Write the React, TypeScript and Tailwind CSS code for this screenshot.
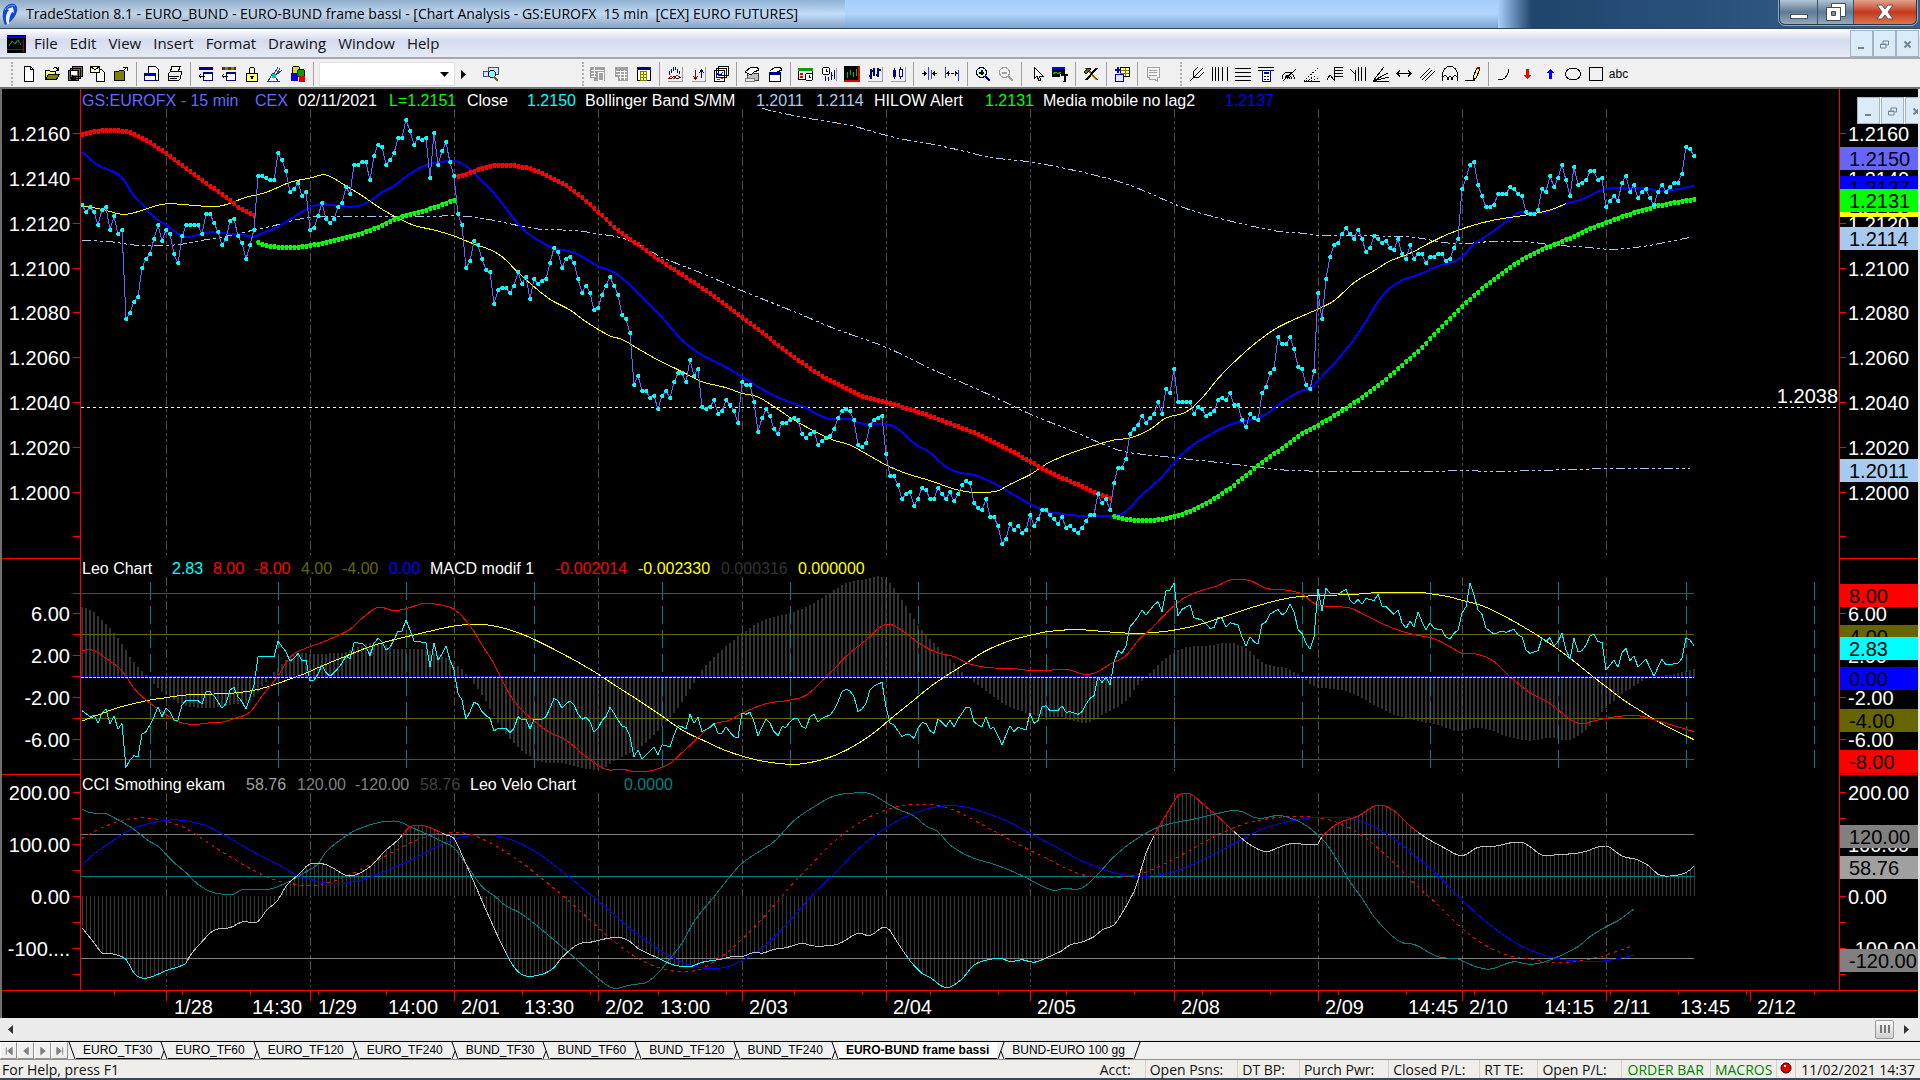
import type { ReactNode } from 'react';

type Point = [number, number];

// ---------------------------------------------------------------------------
// Chart data
// ---------------------------------------------------------------------------

// Closing prices, one per 15 min bar, in ticks (2150 = 1.2150)
const closes = [
  2128, 2125, 2127, 2125, 2119, 2126, 2127, 2117, 2123, 2115, 2117, 2077, 2080, 2085, 2087, 2100, 2104, 2106, 2113, 2119,
  2112, 2117, 2115, 2106, 2102, 2114, 2119, 2119, 2119, 2119, 2115, 2124, 2124, 2120, 2116, 2110, 2113, 2121, 2122, 2114,
  2111, 2104, 2110, 2117, 2141, 2141, 2140, 2139, 2139, 2151, 2148, 2143, 2134, 2135, 2138, 2132, 2134, 2117, 2118, 2123,
  2129, 2122, 2120, 2122, 2127, 2129, 2136, 2133, 2146, 2146, 2147, 2147, 2139, 2150, 2155, 2154, 2146, 2148, 2151, 2158,
  2158, 2166, 2161, 2155, 2158, 2157, 2158, 2140, 2160, 2146, 2152, 2156, 2147, 2141, 2124, 2119, 2100, 2103, 2112, 2110,
  2104, 2099, 2098, 2084, 2090, 2091, 2091, 2089, 2092, 2098, 2093, 2096, 2086, 2095, 2093, 2094, 2095, 2102, 2109, 2107,
  2100, 2104, 2105, 2102, 2095, 2089, 2092, 2089, 2081, 2082, 2088, 2092, 2096, 2092, 2088, 2079, 2077, 2071, 2048, 2052,
  2045, 2045, 2042, 2043, 2037, 2043, 2045, 2042, 2049, 2053, 2053, 2049, 2059, 2052, 2055, 2038, 2037, 2038, 2041, 2035,
  2036, 2041, 2039, 2036, 2031, 2049, 2048, 2048, 2040, 2027, 2033, 2037, 2034, 2028, 2026, 2031, 2031, 2032, 2033, 2032,
  2026, 2024, 2026, 2027, 2021, 2023, 2024, 2025, 2028, 2033, 2036, 2037, 2036, 2032, 2021, 2020, 2022, 2030, 2032, 2033,
  2034, 2017, 2007, 2007, 2003, 1997, 1999, 2000, 1994, 1997, 2002, 2001, 1997, 1997, 2002, 1999, 1997, 2000, 1996, 1999,
  2003, 2005, 2004, 1995, 1993, 1992, 1997, 1989, 1989, 1985, 1977, 1979, 1986, 1983, 1985, 1982, 1983, 1990, 1985, 1988,
  1992, 1992, 1990, 1988, 1986, 1989, 1984, 1985, 1983, 1982, 1984, 1987, 1990, 1990, 1999, 1995, 1997, 1992, 2004, 2011,
  2011, 2015, 2026, 2028, 2030, 2034, 2031, 2033, 2035, 2040, 2035, 2046, 2044, 2055, 2040, 2040, 2040, 2040, 2035, 2038,
  2037, 2034, 2035, 2036, 2041, 2042, 2041, 2044, 2039, 2039, 2032, 2029, 2035, 2033, 2032, 2044, 2047, 2053, 2055, 2069,
  2066, 2066, 2069, 2064, 2056, 2055, 2048, 2046, 2054, 2089, 2077, 2095, 2105, 2110, 2111, 2115, 2118, 2115, 2113, 2117,
  2113, 2107, 2109, 2114, 2113, 2111, 2112, 2109, 2108, 2113, 2106, 2104, 2110, 2104, 2106, 2106, 2102, 2105, 2105, 2106,
  2106, 2103, 2104, 2109, 2113, 2135, 2140, 2146, 2147, 2137, 2132, 2127, 2127, 2128, 2133, 2133, 2133, 2136, 2135, 2133,
  2132, 2125, 2124, 2124, 2126, 2135, 2134, 2141, 2136, 2140, 2146, 2139, 2132, 2145, 2137, 2138, 2139, 2143, 2143, 2139,
  2140, 2127, 2130, 2132, 2130, 2138, 2141, 2134, 2137, 2131, 2134, 2135, 2131, 2128, 2134, 2137, 2134, 2136, 2138, 2138,
  2142, 2154, 2153, 2150,
];

// Indicator curves: [bar, level], levels are thirds of a pixel down the pane
const alertRed1: Point[] = [[0, 71], [3, 64], [7, 60], [12, 67], [16, 90], [21, 129], [26, 174], [31, 218], [35, 252], [38, 280], [40, 298], [43, 315]];
const alertRed2: Point[] = [
  [94, 199], [97, 187], [100, 174], [103, 166], [106, 164], [109, 168], [113, 179], [117, 202], [120, 219], [124, 252], [129, 305], [134, 360],
  [139, 403], [144, 446], [150, 493], [155, 533], [160, 575], [165, 620], [170, 665], [175, 715], [181, 765], [186, 805], [191, 833], [195, 857],
  [201, 876], [209, 905], [215, 931], [220, 953], [226, 983], [232, 1020], [237, 1053], [243, 1093], [248, 1118], [253, 1145], [257, 1163],
];
const alertGreen1: Point[] = [[44, 396], [46, 405], [49, 410], [53, 411], [57, 405], [60, 398], [64, 386], [69, 372], [74, 350], [79, 323], [84, 306], [89, 287], [93, 270]];
const alertGreen2: Point[] = [
  [258, 1217], [261, 1226], [264, 1230], [268, 1230], [273, 1218], [278, 1197], [283, 1165], [288, 1124], [291, 1094], [296, 1048], [300, 1013],
  [305, 970], [309, 944], [314, 908], [319, 869], [324, 825], [329, 775], [334, 722], [339, 660], [344, 600], [348, 555], [353, 507], [357, 470],
  [362, 435], [366, 412], [371, 388], [376, 360], [381, 336], [386, 315], [391, 296], [396, 281], [403, 267],
];
const noLagAverage: Point[] = [
  [0, 125], [4, 166], [7, 181], [10, 203], [13, 258], [16, 295], [18, 322], [21, 345], [25, 378], [27, 380], [30, 372], [32, 367], [35, 370],
  [39, 372], [43, 380], [45, 370], [49, 350], [52, 328], [57, 292], [60, 283], [65, 289], [69, 288], [72, 273], [75, 247], [78, 228], [82, 191],
  [86, 165], [90, 156], [93, 152], [96, 168], [99, 200], [103, 250], [106, 295], [110, 355], [114, 390], [118, 415], [123, 428], [129, 468],
  [133, 487], [137, 525], [140, 562], [145, 622], [150, 690], [155, 735], [160, 765], [165, 800], [171, 844], [176, 872], [181, 893], [184, 914],
  [187, 927], [192, 928], [195, 941], [201, 942], [204, 957], [208, 1000], [212, 1028], [216, 1070], [219, 1087], [223, 1095], [228, 1120],
  [233, 1155], [237, 1182], [241, 1203], [245, 1212], [249, 1217], [258, 1217], [261, 1204], [265, 1155], [270, 1100], [274, 1045], [278, 1003],
  [284, 961], [288, 940], [292, 930], [296, 913], [299, 885], [304, 847], [308, 829], [309, 812], [313, 762], [318, 688], [321, 634], [324, 575],
  [327, 535], [330, 511], [335, 490], [339, 468], [342, 460], [345, 440], [348, 403], [352, 371], [356, 335], [359, 308], [362, 307], [365, 310],
  [371, 282], [375, 268], [381, 237], [391, 235], [394, 243], [397, 241], [403, 228],
];
const bandMiddle: Point[] = [
  [0, 288], [5, 298], [10, 313], [13, 308], [19, 286], [22, 281], [31, 289], [35, 287], [41, 262], [46, 247], [52, 217], [57, 204], [61, 195],
  [66, 228], [70, 257], [74, 290], [78, 318], [83, 346], [88, 360], [93, 378], [98, 402], [102, 419], [105, 440], [109, 487], [113, 530],
  [117, 568], [122, 600], [126, 635], [132, 678], [135, 688], [139, 716], [144, 750], [150, 785], [155, 815], [161, 833], [165, 850], [169, 861],
  [173, 890], [178, 930], [183, 963], [188, 991], [192, 1005], [197, 1038], [201, 1065], [206, 1090], [212, 1112], [219, 1140], [224, 1148],
  [229, 1142], [232, 1123], [237, 1094], [242, 1056], [249, 1022], [258, 990], [262, 984], [267, 958], [271, 924], [276, 906], [280, 864],
  [284, 806], [288, 757], [293, 703], [299, 652], [309, 597], [313, 572], [318, 518], [323, 482], [327, 453], [332, 430], [338, 392], [342, 370],
  [348, 345], [354, 328], [361, 315], [367, 300], [371, 281],
];
const bandLower: Point[] = [
  [0, 391], [7, 395], [14, 406], [24, 404], [30, 391], [36, 379], [43, 360], [48, 347], [53, 331], [57, 322], [61, 319], [67, 320], [78, 319],
  [88, 319], [94, 317], [102, 329], [108, 344], [114, 357], [124, 362], [129, 372], [134, 381], [139, 403], [145, 442], [155, 490], [165, 542],
  [177, 600], [188, 655], [201, 712], [212, 775], [227, 855], [237, 912], [249, 970], [258, 1016], [262, 1028], [273, 1043], [283, 1056],
  [291, 1067], [299, 1079], [304, 1081], [310, 1085], [339, 1084], [345, 1081], [353, 1085], [361, 1082], [375, 1078], [381, 1076], [402, 1076],
];
const bandUpper: Point[] = [
  [170, -6], [172, 2], [183, 28], [192, 46], [201, 76], [207, 92], [213, 104], [220, 122], [227, 142], [237, 156], [248, 181], [259, 214],
  [266, 245], [273, 282], [279, 307], [288, 336], [299, 364], [304, 368], [309, 376], [320, 377], [333, 382], [340, 397], [345, 401], [352, 395],
  [361, 395], [367, 404], [375, 411], [383, 418], [391, 408], [396, 397], [402, 382],
];

const macdBars: Point[] = [
  [0, 170], [3, 187], [6, 222], [8, 250], [10, 282], [12, 320], [14, 352], [16, 376], [18, 402], [20, 428], [22, 443], [25, 466], [28, 473],
  [34, 473], [39, 462], [42, 455], [45, 410], [47, 382], [48, 367], [51, 330], [54, 312], [58, 311], [65, 308], [68, 296], [74, 275], [78, 297],
  [85, 297], [89, 315], [92, 330], [94, 347], [96, 371], [98, 402], [101, 455], [104, 520], [108, 580], [112, 620], [116, 640], [120, 640],
  [129, 661], [133, 635], [137, 610], [140, 590], [143, 555], [147, 505], [150, 457], [153, 400], [154, 380], [156, 345], [160, 300], [165, 250],
  [171, 207], [177, 190], [182, 165], [187, 128], [191, 100], [197, 85], [200, 80], [202, 100], [205, 150], [209, 225], [213, 280], [218, 340],
  [221, 378], [225, 415], [230, 460], [235, 485], [240, 500], [245, 503], [251, 520], [256, 490], [261, 455], [264, 405], [266, 382], [269, 345],
  [272, 315], [276, 292], [283, 285], [287, 278], [291, 295], [295, 335], [299, 350], [301, 355], [305, 380], [308, 410], [313, 418], [316, 425],
  [319, 440], [323, 465], [328, 495], [334, 515], [339, 525], [344, 545], [348, 536], [352, 540], [356, 560], [362, 573], [367, 564], [372, 570],
  [376, 540], [381, 475], [386, 425], [390, 395], [392, 385], [396, 376], [403, 358],
];
const macdSlow: Point[] = [
  [0, 513], [4, 495], [9, 473], [17, 450], [21, 443], [25, 436], [30, 433], [37, 430], [42, 423], [46, 412], [49, 400], [55, 374], [60, 348],
  [65, 323], [72, 290], [77, 272], [83, 255], [89, 238], [93, 228], [98, 223], [102, 226], [107, 240], [113, 268], [123, 330], [129, 372],
  [133, 404], [139, 450], [145, 498], [150, 540], [156, 575], [161, 602], [167, 625], [172, 637], [178, 643], [183, 635], [188, 617], [193, 588],
  [198, 548], [202, 508], [208, 450], [213, 402], [221, 340], [226, 302], [232, 272], [237, 256], [242, 244], [249, 239], [257, 246], [264, 250],
  [272, 242], [278, 228], [284, 206], [292, 174], [299, 151], [304, 140], [309, 137], [318, 133], [324, 128], [335, 128], [338, 133], [342, 141],
  [345, 151], [350, 167], [355, 195], [360, 228], [365, 265], [371, 315], [376, 363], [381, 410], [386, 455], [390, 485], [393, 508], [398, 540],
  [403, 569],
];
const macdFast: Point[] = [
  [0, 301], [3, 301], [6, 325], [10, 362], [13, 415], [16, 450], [20, 485], [24, 515], [28, 523], [33, 517], [35, 517], [38, 506], [42, 486],
  [45, 438], [49, 378], [52, 322], [55, 299], [59, 282], [63, 262], [67, 238], [70, 205], [74, 172], [78, 182], [81, 176], [86, 160], [92, 172],
  [94, 187], [97, 227], [100, 284], [103, 342], [107, 435], [110, 480], [114, 522], [117, 548], [121, 570], [126, 620], [131, 658], [135, 658],
  [139, 666], [143, 660], [147, 640], [150, 608], [153, 575], [156, 540], [158, 522], [162, 510], [165, 490], [171, 461], [177, 450], [181, 436],
  [186, 382], [191, 320], [196, 270], [201, 222], [205, 242], [210, 285], [214, 308], [218, 320], [222, 342], [227, 353], [232, 355], [239, 363],
  [246, 358], [251, 374], [254, 365], [257, 342], [261, 317], [264, 272], [268, 228], [271, 190], [275, 148], [279, 125], [284, 107], [287, 90],
  [292, 92], [296, 115], [299, 118], [302, 122], [305, 132], [308, 160], [310, 169], [317, 174], [322, 203], [328, 236], [333, 254], [338, 266],
  [342, 290], [345, 310], [349, 313], [353, 335], [357, 380], [362, 428], [367, 460], [372, 508], [375, 521], [378, 513], [383, 501], [389, 497],
  [394, 513], [398, 527], [403, 545],
];
const leo: Point[] = [
  [0, 482], [2, 500], [3, 495], [4, 520], [5, 488], [6, 478], [7, 522], [8, 497], [9, 538], [10, 520], [11, 652], [12, 630], [13, 617], [14, 620],
  [15, 552], [16, 545], [17, 525], [18, 500], [19, 470], [20, 500], [21, 475], [22, 485], [23, 510], [24, 510], [25, 465], [26, 451], [29, 452],
  [30, 462], [31, 425], [32, 425], [33, 437], [34, 455], [35, 475], [36, 460], [37, 420], [38, 412], [39, 440], [40, 455], [41, 477], [42, 440],
  [43, 405], [44, 320], [48, 320], [49, 273], [50, 290], [51, 305], [52, 333], [53, 325], [54, 310], [55, 333], [56, 330], [57, 393], [58, 390],
  [59, 372], [60, 345], [61, 368], [62, 380], [63, 368], [64, 355], [65, 340], [66, 317], [67, 327], [68, 278], [70, 280], [71, 290], [72, 317],
  [73, 280], [74, 265], [75, 275], [76, 300], [77, 292], [78, 270], [79, 243], [80, 243], [81, 210], [82, 240], [83, 273], [86, 278], [87, 352],
  [88, 278], [89, 330], [90, 312], [91, 287], [92, 330], [93, 360], [94, 430], [95, 450], [96, 508], [97, 485], [98, 457], [99, 463], [100, 485],
  [101, 497], [102, 505], [103, 543], [104, 535], [106, 535], [107, 548], [108, 535], [109, 500], [110, 510], [111, 508], [112, 537], [113, 508],
  [115, 507], [116, 500], [117, 475], [118, 445], [119, 452], [120, 475], [121, 462], [122, 453], [123, 465], [124, 492], [125, 508], [126, 502],
  [127, 515], [128, 547], [129, 535], [130, 512], [131, 500], [132, 472], [133, 490], [134, 510], [135, 528], [136, 532], [137, 560], [138, 620],
  [139, 600], [140, 627], [143, 592], [144, 615], [145, 584], [147, 590], [148, 555], [149, 527], [150, 530], [151, 537], [152, 493], [153, 520],
  [154, 502], [155, 545], [157, 533], [158, 520], [159, 550], [160, 550], [161, 530], [162, 547], [163, 560], [164, 563], [165, 490], [166, 493],
  [167, 487], [168, 515], [169, 558], [170, 530], [171, 507], [172, 520], [173, 545], [174, 557], [175, 530], [176, 532], [177, 515], [178, 506],
  [179, 506], [180, 530], [181, 535], [182, 500], [183, 493], [184, 515], [185, 505], [187, 495], [188, 480], [189, 455], [190, 425], [191, 418],
  [192, 423], [193, 440], [194, 485], [195, 477], [196, 460], [197, 420], [198, 408], [200, 397], [201, 470], [202, 520], [203, 525], [205, 560],
  [206, 553], [207, 555], [208, 565], [209, 535], [210, 518], [211, 520], [212, 542], [213, 550], [214, 507], [215, 517], [216, 530], [217, 510],
  [218, 530], [219, 507], [220, 490], [221, 472], [222, 473], [223, 515], [224, 525], [225, 530], [226, 500], [227, 535], [228, 533], [229, 557],
  [230, 585], [231, 555], [232, 527], [233, 545], [234, 532], [236, 540], [237, 490], [238, 520], [239, 512], [240, 470], [241, 467], [242, 482],
  [244, 482], [245, 467], [246, 487], [247, 485], [249, 493], [250, 485], [251, 463], [252, 445], [253, 437], [254, 380], [255, 398], [256, 382],
  [257, 405], [258, 337], [259, 302], [260, 310], [261, 288], [262, 230], [263, 217], [264, 200], [265, 180], [266, 195], [267, 180], [268, 165],
  [269, 155], [270, 185], [271, 122], [272, 120], [273, 100], [274, 198], [275, 178], [277, 165], [278, 203], [280, 210], [282, 235], [283, 233],
  [284, 202], [285, 205], [286, 232], [287, 218], [289, 225], [290, 260], [291, 288], [292, 260], [293, 275], [294, 282], [295, 223], [296, 215],
  [297, 192], [299, 178], [300, 195], [301, 187], [302, 162], [303, 185], [304, 238], [305, 250], [306, 280], [307, 298], [308, 260], [309, 117],
  [310, 182], [311, 115], [312, 130], [314, 132], [316, 118], [317, 150], [318, 162], [319, 148], [320, 163], [321, 145], [323, 152], [324, 133],
  [325, 168], [326, 170], [328, 193], [329, 180], [330, 218], [331, 235], [332, 213], [333, 232], [334, 185], [335, 215], [336, 240], [337, 218],
  [338, 235], [340, 240], [341, 262], [342, 267], [343, 250], [344, 240], [345, 190], [346, 170], [347, 100], [348, 135], [349, 180], [350, 193],
  [351, 235], [353, 252], [355, 243], [356, 247], [358, 238], [359, 255], [360, 260], [361, 300], [362, 310], [364, 302], [365, 265], [366, 275],
  [367, 263], [368, 288], [369, 275], [370, 250], [371, 300], [372, 327], [373, 265], [374, 305], [375, 302], [376, 285], [377, 258], [378, 253],
  [379, 275], [380, 277], [381, 360], [383, 330], [384, 352], [385, 308], [386, 295], [387, 333], [388, 317], [389, 352], [390, 340], [391, 328],
  [392, 353], [393, 380], [394, 352], [395, 328], [396, 345], [399, 340], [400, 325], [401, 265], [402, 270], [403, 287],
];

const cci: Point[] = [
  [0, 1133], [3, 1178], [5, 1209], [7, 1210], [11, 1228], [13, 1270], [15, 1284], [17, 1282], [21, 1262], [26, 1240], [27, 1217], [30, 1175],
  [33, 1141], [37, 1133], [40, 1116], [44, 1115], [46, 1082], [49, 1050], [51, 1008], [54, 975], [57, 942], [61, 944], [66, 976], [68, 976],
  [72, 950], [76, 900], [79, 870], [82, 830], [84, 825], [86, 829], [88, 838], [91, 855], [93, 865], [95, 915], [98, 997], [101, 1080],
  [104, 1160], [107, 1232], [109, 1265], [111, 1278], [115, 1273], [118, 1253], [120, 1222], [124, 1183], [127, 1177], [132, 1164], [135, 1164],
  [137, 1175], [139, 1195], [144, 1224], [148, 1245], [152, 1250], [155, 1237], [160, 1227], [163, 1219], [165, 1220], [168, 1207], [170, 1210],
  [173, 1198], [176, 1193], [180, 1180], [183, 1188], [189, 1182], [194, 1150], [197, 1157], [201, 1131], [204, 1180], [207, 1232], [210, 1270],
  [212, 1282], [216, 1313], [220, 1287], [223, 1245], [227, 1228], [230, 1226], [232, 1235], [235, 1229], [238, 1237], [241, 1224], [245, 1202],
  [247, 1185], [250, 1176], [253, 1160], [255, 1140], [258, 1125], [259, 1110], [263, 1025], [264, 990], [266, 910], [269, 835], [271, 795],
  [273, 755], [274, 735], [277, 732], [278, 738], [280, 760], [284, 800], [288, 845], [292, 884], [296, 905], [299, 893], [302, 881], [309, 882],
  [310, 860], [314, 820], [319, 798], [324, 765], [328, 782], [332, 828], [336, 863], [340, 890], [345, 917], [349, 892], [353, 889], [360, 877],
  [365, 915], [368, 915], [375, 907], [381, 888], [385, 918], [389, 930], [392, 950], [394, 973], [397, 978], [401, 968], [403, 948],
];
const velo: Point[] = [
  [0, 777], [2, 788], [6, 791], [8, 803], [12, 830], [14, 848], [17, 875], [19, 889], [23, 938], [26, 968], [29, 1003], [33, 1028], [38, 1032],
  [40, 1018], [47, 1017], [52, 993], [55, 972], [59, 942], [61, 905], [67, 850], [70, 833], [74, 818], [78, 813], [80, 818], [83, 835], [87, 857],
  [90, 875], [93, 893], [97, 960], [100, 1010], [103, 1037], [106, 1068], [109, 1085], [113, 1120], [118, 1170], [123, 1222], [128, 1275],
  [132, 1311], [134, 1315], [136, 1308], [139, 1302], [141, 1298], [144, 1270], [147, 1225], [150, 1180], [153, 1115], [158, 1040], [162, 980],
  [165, 940], [169, 907], [173, 875], [178, 812], [184, 763], [188, 738], [192, 730], [197, 731], [201, 758], [204, 778], [208, 798], [211, 828],
  [214, 845], [217, 885], [222, 920], [229, 947], [235, 977], [239, 1002], [243, 1022], [245, 1016], [250, 1014], [254, 972], [258, 920],
  [263, 872], [269, 832], [274, 816], [279, 805], [284, 790], [289, 782], [294, 805], [299, 796], [301, 800], [304, 813], [307, 835], [311, 880],
  [314, 935], [317, 995], [320, 1045], [323, 1100], [327, 1152], [330, 1178], [333, 1183], [339, 1220], [344, 1227], [348, 1248], [352, 1257],
  [358, 1235], [362, 1243], [367, 1230], [374, 1190], [377, 1160], [381, 1130], [384, 1112], [388, 1077],
];
const veloSlow: Point[] = [
  [0, 945], [3, 912], [7, 878], [12, 840], [17, 820], [21, 811], [25, 811], [31, 827], [35, 851], [42, 900], [49, 944], [54, 976], [57, 988],
  [61, 999], [66, 999], [72, 982], [78, 952], [84, 920], [90, 882], [93, 868], [97, 857], [103, 857], [108, 872], [114, 910], [121, 973],
  [127, 1033], [132, 1083], [137, 1135], [144, 1197], [148, 1225], [152, 1245], [157, 1256], [162, 1248], [167, 1218], [171, 1185], [175, 1138],
  [179, 1085], [183, 1030], [189, 960], [194, 898], [199, 850], [204, 812], [209, 786], [214, 770], [220, 769], [225, 785], [231, 812],
  [237, 850], [243, 888], [249, 927], [253, 948], [258, 968], [264, 979], [271, 971], [277, 947], [283, 912], [289, 875], [294, 843], [299, 822],
  [304, 809], [309, 802], [317, 804], [320, 815], [324, 837], [329, 875], [333, 915], [338, 965], [345, 1050], [351, 1115], [357, 1168],
  [362, 1200], [367, 1220], [371, 1230], [376, 1234], [381, 1232], [388, 1216],
];
const veloFast: Point[] = [
  [0, 865], [5, 833], [10, 812], [14, 804], [19, 808], [25, 830], [29, 858], [35, 905], [42, 955], [47, 985], [52, 1000], [57, 1007], [62, 997],
  [67, 974], [71, 950], [76, 917], [81, 885], [86, 860], [90, 850], [95, 848], [99, 861], [104, 892], [110, 938], [115, 986], [121, 1045],
  [127, 1110], [132, 1165], [137, 1210], [140, 1232], [144, 1252], [149, 1265], [154, 1260], [158, 1235], [162, 1200], [167, 1145], [172, 1080],
  [177, 1010], [183, 935], [187, 885], [192, 838], [197, 800], [202, 776], [207, 764], [213, 764], [218, 780], [224, 817], [229, 850],
  [235, 889], [241, 924], [246, 955], [251, 977], [256, 983], [261, 979], [266, 966], [272, 933], [278, 895], [283, 860], [287, 838], [292, 817],
  [299, 802], [304, 799], [309, 803], [314, 818], [320, 856], [324, 895], [328, 938], [333, 1000], [339, 1065], [345, 1135], [351, 1187],
  [357, 1218], [362, 1228], [367, 1237], [372, 1237], [377, 1227], [381, 1215], [388, 1186],
];

// ---------------------------------------------------------------------------
// Drawing helpers
// ---------------------------------------------------------------------------

const PRICE_TOP = 21;
const MACD_TOP = -9;
const CCI_TOP = -225;
const PLOT_END = 1613;

const barX = (bar: number) => 1 + bar * 4;
const priceY = (tick: number) => 44.3 + (2160 - tick) * 2.243;
const days = Array.from({ length: 11 }, (_, i) => 85 + i * 144);

// One level per bar, eased between the stored points
function sample(points: Point[]): Point[] {
  const slope = points.map((_, i) => {
    const a = points[Math.max(0, i - 1)];
    const b = points[Math.min(points.length - 1, i + 1)];
    return (b[1] - a[1]) / (b[0] - a[0]);
  });
  const out: Point[] = [];
  for (let i = 0; i < points.length - 1; i++) {
    const [x0, y0] = points[i];
    const [x1, y1] = points[i + 1];
    const h = x1 - x0;
    for (let bar = x0; bar < x1; bar++) {
      const t = (bar - x0) / h;
      const t2 = t * t;
      const t3 = t2 * t;
      out.push([
        bar,
        (2 * t3 - 3 * t2 + 1) * y0 + (t3 - 2 * t2 + t) * h * slope[i] + (3 * t2 - 2 * t3) * y1 + (t3 - t2) * h * slope[i + 1],
      ]);
    }
  }
  out.push(points[points.length - 1]);
  return out;
}

const toPath = (points: Point[], top: number) =>
  points.map(([bar, level]) => `${barX(bar)},${(level / 3 + top).toFixed(1)}`).join(' ');

interface CurveProps {
  points: Point[];
  top: number;
  color: string;
  width?: number;
  dash?: string;
  smooth?: boolean;
}

function Curve({ points, top, color, width = 1, dash, smooth = true }: CurveProps) {
  return (
    <polyline
      points={toPath(smooth ? sample(points) : points, top)}
      fill="none"
      stroke={color}
      strokeWidth={width}
      strokeDasharray={dash}
    />
  );
}

function Beads({ points, color }: { points: Point[]; color: string }) {
  return (
    <g fill={color}>
      {sample(points).map(([bar, level]) => (
        <path key={bar} d={`M${barX(bar) - 2} ${Math.round(level / 3 + PRICE_TOP) - 1}h1v-1h3v5h-3v-2h-1z`} />
      ))}
    </g>
  );
}

function DayLines({ from, to }: { from: number; to: number }) {
  return (
    <g stroke="#4d4d4d" strokeDasharray="9 3 3 3 3 3">
      {days.map(x => (
        <line key={x} x1={x + 0.5} x2={x + 0.5} y1={from} y2={to} />
      ))}
    </g>
  );
}

type LegendItem = [number, string, string];

function Legend({ items, y }: { items: LegendItem[]; y: number }) {
  return (
    <g fontSize="16">
      {items.map(([x, text, color]) => (
        <text key={x} x={x} y={y} fill={color}>
          {text}
        </text>
      ))}
    </g>
  );
}

type Tick = [number, string];
type Tag = [number, string, string];

function LeftAxis({ ticks, height, minor = [] }: { ticks: Tick[]; height: number; minor?: number[] }) {
  return (
    <svg className="block w-[78px] shrink-0" height={height} fontSize="20" fill="#fff" shapeRendering="crispEdges">
      {ticks.map(([y, label]) => (
        <text key={y} x="68" y={y + 8} textAnchor="end">
          {label}
        </text>
      ))}
      <path
        d={[...ticks.map(t => t[0]), ...minor].map(y => `M71 ${y}h7`).join('') + `M0 ${height - 1}h78`}
        transform="translate(0 .5)"
        stroke="#f00"
      />
    </svg>
  );
}

interface RightAxisProps {
  ticks: Tick[];
  tags: Tag[];
  height: number;
  minor?: number[];
}

function RightAxis({ ticks, tags, height, minor = [] }: RightAxisProps) {
  return (
    <svg className="block w-[78px] shrink-0" height={height} fontSize="20" fill="#fff" shapeRendering="crispEdges">
      {ticks.map(([y, label]) => (
        <text key={y} x="8" y={y + 8}>
          {label}
        </text>
      ))}
      <path
        d={[...ticks.map(t => t[0]), ...minor].map(y => `M0 ${y}h6`).join('') + `M0 ${height - 1}h78`}
        transform="translate(0 .5)"
        stroke="#f00"
      />
      {tags.map(([y, label, color]) => (
        <g key={y}>
          <rect x="0" y={y} width="78" height="23" fill={color} />
          <text x="9" y={y + 19} fill="#000">
            {label}
          </text>
        </g>
      ))}
    </svg>
  );
}

function Pane({ height, left, right, children }: { height: number; left: ReactNode; right: ReactNode; children: ReactNode }) {
  return (
    <div className="flex">
      {left}
      <div className="min-w-0 flex-1 border-x border-[#f00]">
        <svg className="block w-full" height={height} shapeRendering="crispEdges">
          {children}
        </svg>
      </div>
      {right}
    </div>
  );
}

// ---------------------------------------------------------------------------
// Panes
// ---------------------------------------------------------------------------

const priceLegend: LegendItem[] = [
  [1, 'GS:EUROFX - 15 min', '#6666ff'],
  [174, 'CEX', '#6666ff'],
  [217, '02/11/2021', '#fff'],
  [308, 'L=1.2151', '#0f0'],
  [386, 'Close', '#fff'],
  [446, '1.2150', '#0ff'],
  [504, 'Bollinger Band S/MM', '#fff'],
  [675, '1.2011', '#a6caf0'],
  [735, '1.2114', '#a6caf0'],
  [793, 'HILOW Alert', '#fff'],
  [904, '1.2131', '#0f0'],
  [962, 'Media mobile no lag2', '#fff'],
  [1144, '1.2137', '#00f'],
];

const priceTicks: Tick[] = [
  [44, '1.2160'], [89, '1.2140'], [134, '1.2120'], [179, '1.2100'], [223, '1.2080'],
  [268, '1.2060'], [313, '1.2040'], [358, '1.2020'], [403, '1.2000'],
];

function PricePane() {
  return (
    <Pane
      height={470}
      left={<LeftAxis height={470} ticks={priceTicks} minor={[447]} />}
      right={
        <RightAxis
          height={470}
          ticks={priceTicks}
          minor={[447]}
          tags={[
            [58, '1.2150', '#6666ff'],
            [105, '1.2128', '#ff0'],
            [87, '1.2137', '#00f'],
            [100, '1.2131', '#0f0'],
            [138, '1.2114', '#a6caf0'],
            [370, '1.2011', '#a6caf0'],
          ]}
        />
      }
    >
      <DayLines from={20} to={466} />
      <line x1="0" x2="1756" y1="318.5" y2="318.5" stroke="#fff" strokeDasharray="3 3" />
      <text x="1757" y="314" fontSize="20" fill="#fff" textAnchor="end">
        1.2038
      </text>
      <Curve points={bandUpper} top={PRICE_TOP} color="#a6caf0" dash="9 3 3 3 3 3" />
      <Curve points={bandLower} top={PRICE_TOP} color="#a6caf0" dash="9 3 3 3 3 3" />
      <Curve points={noLagAverage} top={PRICE_TOP} color="#00f" width={2} />
      <Curve points={bandMiddle} top={PRICE_TOP} color="#ff0" />
      <Beads points={alertRed1} color="#f00" />
      <Beads points={alertRed2} color="#f00" />
      <Beads points={alertGreen1} color="#0f0" />
      <Beads points={alertGreen2} color="#0f0" />
      <polyline points={closes.map((c, i) => `${barX(i)},${priceY(c).toFixed(1)}`).join(' ')} fill="none" stroke="#6666ff" />
      <g fill="#0ff">
        {closes.map((c, i) => (
          <path key={i} d={`M${barX(i) - 2} ${Math.round(priceY(c)) - 1}h1v-1h3v4h-3v-1h-1z`} />
        ))}
      </g>
      <Legend items={priceLegend} y={17} />
    </Pane>
  );
}

const macdLegend: LegendItem[] = [
  [1, 'Leo Chart', '#fff'],
  [91, '2.83', '#0ff'],
  [132, '8.00', '#f00'],
  [173, '-8.00', '#f00'],
  [220, '4.00', '#666600'],
  [261, '-4.00', '#666600'],
  [308, '0.00', '#00f'],
  [349, 'MACD modif 1', '#fff'],
  [474, '-0.002014', '#f00'],
  [557, '-0.002330', '#ff0'],
  [640, '0.000316', '#333'],
  [717, '0.000000', '#ff0'],
];

const macdTicks: Tick[] = [[54, '6.00'], [96, '2.00'], [138, '-2.00'], [180, '-6.00']];

function MacdPane() {
  return (
    <Pane
      height={216}
      left={<LeftAxis height={216} ticks={macdTicks} minor={[34, 75, 117, 159, 200]} />}
      right={
        <RightAxis
          height={216}
          ticks={macdTicks}
          tags={[
            [25, '8.00', '#f00'],
            [66, '4.00', '#666600'],
            [78, '2.83', '#0ff'],
            [108, '0.00', '#00f'],
            [150, '-4.00', '#666600'],
            [191, '-8.00', '#f00'],
          ]}
        />
      }
    >
      <g fill="#333">
        {sample(macdBars).map(([bar, level]) => (
          <rect
            key={bar}
            x={barX(bar) - 1}
            y={Math.min(118, level / 3 + MACD_TOP)}
            width="2"
            height={Math.abs(level - 382) / 3}
          />
        ))}
      </g>
      <DayLines from={18} to={212} />
      <g stroke="#008080" strokeDasharray="18 6">
        {Array.from({ length: 14 }, (_, i) => 69.5 + i * 128).map(x => (
          <line key={x} x1={x} x2={x} y1="23" y2="210" />
        ))}
      </g>
      <path d={`M0 34.5H${PLOT_END}M0 200.5H${PLOT_END}`} stroke="#f00" />
      <path d={`M0 75.5H${PLOT_END}M0 159.5H${PLOT_END}`} stroke="#666600" />
      <Curve points={macdSlow} top={MACD_TOP} color="#ff0" />
      <Curve points={macdFast} top={MACD_TOP} color="#f00" />
      <Curve points={leo} top={MACD_TOP} color="#0ff" smooth={false} />
      <path d={`M0 118.5H${PLOT_END}`} stroke="#ff0" strokeDasharray="3 1" />
      <path d={`M0 117.5H${PLOT_END}`} stroke="#00f" strokeDasharray="3 1" />
      <Legend items={macdLegend} y={15} />
    </Pane>
  );
}

const cciLegend: LegendItem[] = [
  [1, 'CCI Smothing ekam', '#fff'],
  [165, '58.76', '#a0a0a0'],
  [216, '120.00', '#808080'],
  [274, '-120.00', '#808080'],
  [339, '58.76', '#404040'],
  [389, 'Leo Velo Chart', '#fff'],
  [543, '0.0000', '#008080'],
];

// Splits the CCI line where it crosses the +/-120 levels
function cciColor(level: number) {
  if (level < 853) return '#f00';
  if (level > 1225) return '#0ff';
  return '#c0c0c0';
}

function CciPane() {
  const line = sample(cci);

  return (
    <Pane
      height={216}
      left={
        <LeftAxis
          height={216}
          ticks={[[17, '200.00'], [69, '100.00'], [121, '0.00'], [173, '-100....']]}
          minor={[43, 95, 147, 199]}
        />
      }
      right={
        <RightAxis
          height={216}
          ticks={[[17, '200.00'], [69, '100.00'], [121, '0.00'], [173, '-100.00']]}
          minor={[43, 95, 147, 199]}
          tags={[
            [50, '120.00', '#808080'],
            [81, '58.76', '#a0a0a0'],
            [174, '-120.00', '#808080'],
          ]}
        />
      }
    >
      <DayLines from={18} to={212} />
      <g fill="#3a3a3a">
        {line.map(([bar, level]) => (
          <rect key={bar} x={barX(bar)} y={Math.min(121, level / 3 + CCI_TOP)} width="1" height={Math.abs(level - 1039) / 3} />
        ))}
      </g>
      <path d={`M0 59.5H${PLOT_END}M0 183.5H${PLOT_END}`} stroke="#808080" />
      <path d={`M0 101.5H${PLOT_END}`} stroke="#008080" />
      <Curve points={veloFast} top={CCI_TOP} color="#f00" dash="3 4" />
      <Curve points={veloSlow} top={CCI_TOP} color="#00f" />
      <Curve points={velo} top={CCI_TOP} color="#008080" />
      {line.slice(1).map((point, i) => (
        <polyline key={point[0]} points={toPath([line[i], point], CCI_TOP)} stroke={cciColor(point[1])} />
      ))}
      <Legend items={cciLegend} y={15} />
    </Pane>
  );
}

const timeLabels: [number, string][] = [
  [172, '1/28'], [250, '14:30'], [316, '1/29'], [386, '14:00'], [459, '2/01'], [522, '13:30'], [603, '2/02'],
  [658, '13:00'], [747, '2/03'], [891, '2/04'], [1035, '2/05'], [1179, '2/08'], [1323, '2/09'], [1406, '14:45'],
  [1467, '2/10'], [1542, '14:15'], [1611, '2/11'], [1678, '13:45'], [1755, '2/12'],
];

function TimeAxis() {
  const minor = Array.from({ length: 26 }, (_, i) => `M${112.5 + i * 68} 0v4`).join('');
  const major = Array.from({ length: 12 }, (_, i) => `M${164.5 + i * 144} 0v10`).join('');

  return (
    <svg className="-mt-px block w-full border-t border-[#f00]" height="28" fontSize="20" fill="#fff" shapeRendering="crispEdges">
      <path d={minor + major} stroke="#f00" />
      {timeLabels.map(([x, label]) => (
        <text key={x} x={x} y="23">
          {label}
        </text>
      ))}
    </svg>
  );
}

// ---------------------------------------------------------------------------
// Toolbar
// ---------------------------------------------------------------------------

const page = <path d="M3.5 .5h6l3 3v12h-9zM9.5 .5v3h3" fill="#fff" stroke="#000" />;

const icons: Record<string, ReactNode> = {
  'New': page,
  'Open': (
    <>
      <path d="M1.5 13.5v-9h4l1 1h5v3" fill="#ffff66" stroke="#000" />
      <path d="M1.5 13.5l3-5h11l-3 5z" fill="#808000" stroke="#000" />
      <path d="M9 3c2-3 4-1 5 1M14.500 1v3h-3" fill="none" stroke="#000" />
    </>
  ),
  'Save all': (
    <>
      <path d="M5.500 .5h10v10h-10zM3.500 2.500h10v10h-10zM1.500 4.500h10v10h-10z" fill="#808000" stroke="#000" />
      <path d="M4 5h6v4H4z" fill="#fff" />
      <path d="M4 11h5v4H4z" fill="#000" />
    </>
  ),
  'Send': (
    <>
      <path d="M6.500 3.500h5l3 3v9h-8z" fill="#fff" stroke="#000" />
      <path d="M.5 .5h9v6h-9z" fill="#ffffcc" stroke="#000" />
      <path d="M.5 .5l4.500 3.500l4.500-3.500" fill="none" stroke="#000" />
    </>
  ),
  'Close folder': (
    <>
      <path d="M1.500 14.500v-9h4l1-1h4l1 1v9z" fill="#808000" stroke="#000" />
      <path d="M10 1h4v4M14 1l-3 3" fill="none" stroke="#000080" />
    </>
  ),
  'Workspace': (
    <>
      <path d="M4.500 .5h7l3 3v11h-10z" fill="#fff" stroke="#000" />
      <path d="M.5 7.500h11v7H.5z" fill="#fff" stroke="#000080" />
      <path d="M1 7h11v3H1z" fill="#0000c0" />
    </>
  ),
  'Print': (
    <>
      <path d="M5 .5h8l-2 6H3z" fill="#fff" stroke="#000" />
      <path d="M1.500 7.500l2-2h11l-1 7-2 2h-10z" fill="#e8e8e8" stroke="#000" />
      <path d="M2 10h10M3 12.500h7" stroke="#000" />
      <path d="M5 11h4" stroke="#ff0" />
    </>
  ),
  'Insert row': (
    <>
      <path d="M1 1h14v3H1z" fill="#000080" />
      <path d="M5.500 6.500h9v8h-9z" fill="#fff" stroke="#000080" />
      <path d="M5 7.500h10M1 10h6M3 8l-2 2 2 2" stroke="#000" fill="none" />
    </>
  ),
  'Insert bar': (
    <>
      <path d="M1 1h14v3H1z" fill="#c00000" />
      <path d="M4 1h3v3H4zM10 1h3v3h-3z" fill="#00c000" />
      <path d="M5.500 6.500h9v8h-9z" fill="#fff" stroke="#000080" />
      <path d="M5 7.500h10M1 10h6M3 8l-2 2 2 2" stroke="#000" fill="none" />
    </>
  ),
  'Lock': (
    <>
      <path d="M5.500 7V3l1-2h3l1 2v4" fill="none" stroke="#000" />
      <path d="M2.500 7.500h11v8h-11z" fill="#ffff66" stroke="#000" />
      <path d="M7 10h2v3H7zM6 10h4v1H6z" fill="#000" />
    </>
  ),
  'Satellite': (
    <>
      <path d="M1 15l5-8 5 8zM7 8l4-7M9 9l4-7M8 10l7-6" fill="none" stroke="#404080" />
      <path d="M5 8h4v4H5z" fill="#00c0c0" />
      <path d="M1 15h3M9 15h4" stroke="#c00000" />
    </>
  ),
  'Blocks': (
    <>
      <circle cx="6" cy="4" r="4" fill="#e0e000" stroke="#000" />
      <circle cx="11" cy="7" r="4" fill="#00a000" stroke="#000" />
      <path d="M1 7h7v8H1z" fill="#0000d0" />
      <path d="M9 10h6v6H9z" fill="#e00000" />
    </>
  ),
  'Look up': (
    <>
      <path d="M5.500 1.500h10v7h-10zM.5 5.500h6v5h-6z" fill="#d8e4f4" stroke="#405080" />
      <circle cx="9" cy="8" r="3.500" fill="#7fffff" stroke="#000" />
      <path d="M11 11l4 4" stroke="#806000" strokeWidth="2" />
    </>
  ),
  'Account': (
    <>
      <path d="M0 1h15v14H4v-3H0z" fill="#a0a0a0" />
      <path d="M1 4h13M1 7h5M1 10h5M4 1v10M8 6h5v8H8z" stroke="#fff" fill="none" />
    </>
  ),
  'Positions': (
    <>
      <path d="M2 1h13v14H5v-4H2z" fill="#a0a0a0" />
      <path d="M3 5h11M3 8h11M6 11h8M7 4v10M11 4v10" stroke="#fff" />
    </>
  ),
  'Order table': (
    <>
      <path d="M1.500 1.500h13v13h-13z" fill="#fff" stroke="#000" />
      <path d="M1 1h14v3H1z" fill="#000080" />
      <path d="M4 5h6v9H4z" fill="#ffff66" stroke="#808000" />
      <path d="M4 8h6M4 11h6M7 5v9" stroke="#808000" />
    </>
  ),
  'Format analysis': (
    <>
      <path d="M15.500 1v14.500H1" fill="none" stroke="#a0a0a0" />
      <path d="M2 5v4M4 3v4M6 1v4M8 1v3M10 3v4M12 5v3" stroke="#0000c0" />
      <path d="M1 13l3-3 3 3 3-4 4 3" fill="none" stroke="#e00000" />
      <path d="M2 12h3l2-2 3 3 4-2" fill="none" stroke="#000" />
    </>
  ),
  'Up down': (
    <>
      <path d="M15.500 1v14.500H2" fill="none" stroke="#a0a0a0" />
      <path d="M5.500 4v9M3 10l2.500 3 2.500-3" fill="none" stroke="#900000" />
      <path d="M11.500 12V4M9 7l2.500-3 2.500 3" fill="none" stroke="#000080" />
    </>
  ),
  'Strategies': (
    <>
      <path d="M5.500 .5h10v9h-10zM3.500 2.500h10v9h-10zM1.500 4.500h10v11h-10z" fill="#fff" stroke="#000" />
      <path d="M3 11l2-4 2 3 3-4" stroke="#0000ff" fill="none" />
      <path d="M4 13.500h3M8 12.500h2" stroke="#e00000" />
    </>
  ),
  'Format symbol': (
    <>
      <path d="M3.500 7.500h11v7h-11z" fill="#c0c0c0" stroke="#404040" />
      <path d="M1 6l6-5h6l2 3-5 2-3 3z" fill="#fff" stroke="#000" />
      <path d="M1 12h9v3H1z" fill="#e8e8e8" stroke="#808080" />
    </>
  ),
  'Format window': (
    <>
      <path d="M2.500 6.500h11v9h-11z" fill="#fff" stroke="#000" />
      <path d="M2 6h12v3H2z" fill="#000080" />
      <path d="M3 5l5-4h5l2 3-5 2" fill="#fff" stroke="#000" />
    </>
  ),
  'Schedule': (
    <>
      <path d="M.5 2.500h14v11H.5z" fill="#fff" stroke="#000" />
      <path d="M0 2h15v3H0z" fill="#00a000" />
      <path d="M2 8h3M2 11h3" stroke="#e00000" strokeWidth="2" />
      <circle cx="11" cy="11" r="4" fill="#fff" stroke="#000" />
      <path d="M11 9v2h2" fill="none" stroke="#000" />
    </>
  ),
  'Bar interval': (
    <>
      <circle cx="5" cy="5" r="4" fill="#fff" stroke="#000" />
      <path d="M5 3v2h2" fill="none" stroke="#000" />
      <path d="M4 10v5M7 11v4M10 6v8M13 4v9M10 9h2" stroke="#000080" />
      <path d="M15.500 2v13" stroke="#a0a0a0" />
    </>
  ),
  'Chart colors': (
    <>
      <path d="M0 0h16v16H0z" fill="#000" />
      <path d="M0 15h16M15 0v15" stroke="#e00000" strokeWidth="2" />
      <path d="M3 6v6M6 4v5M9 6v5M12 3v7" stroke="#00c000" />
    </>
  ),
  'Bars': (
    <>
      <path d="M15.500 1v14.500H1" fill="none" stroke="#a0a0a0" />
      <path d="M4 3v10M2 10h2M4 5h3M7 2v8M11 2v9M9 9h2M11 4h3" stroke="#000080" strokeWidth="2" fill="none" />
    </>
  ),
  'Candles': (
    <>
      <path d="M15.500 1v14.500H1" fill="none" stroke="#a0a0a0" />
      <path d="M3 4h3v7H3z" fill="#000080" />
      <path d="M4.500 2v11M10.500 1v12" stroke="#000080" />
      <path d="M9.500 3.500h3v7h-3z" fill="#fff" stroke="#000080" />
    </>
  ),
  'Decrease spacing': (
    <>
      <path d="M7.500 1v13M10.500 4v9" stroke="#3333ff" />
      <path d="M1 7.500h4M3 5.500l2 2-2 2M16 7.500h-4M14 5.500l-2 2 2 2" fill="none" stroke="#000" />
    </>
  ),
  'Increase spacing': (
    <>
      <path d="M1.500 1v11M14.500 4v11" stroke="#3333ff" />
      <path d="M3 7.500h10M5 5.500l-2 2 2 2M11 5.500l2 2-2 2" fill="none" stroke="#000" strokeDasharray="3 1" />
    </>
  ),
  'Zoom in': (
    <>
      <circle cx="6.500" cy="6.500" r="5" fill="#c8ffff" stroke="#000" />
      <path d="M4 6.500h5M6.500 4v5" stroke="#000" strokeWidth="2" />
      <path d="M10 10l5 5" stroke="#0000a0" strokeWidth="2" />
    </>
  ),
  'Zoom out': (
    <>
      <circle cx="6.500" cy="6.500" r="5" fill="#f4f4f4" stroke="#a0a0a0" />
      <path d="M4 6.500h5M10 10l5 5" stroke="#a0a0a0" strokeWidth="2" />
    </>
  ),
  'Pointer': <path d="M5 1v12l3-3 2 5 2-1-2-4h4z" fill="#fff" stroke="#000" />,
  'Chart text': (
    <>
      <path d="M0 1h13v10H0z" fill="#000" />
      <path d="M0 1h13v2H0z" fill="#0000ff" />
      <path d="M1 8l3-2 2 2 3-2" fill="none" stroke="#00e000" />
      <path d="M8 8h8v3h-2v5h-4v-5H8z" fill="#f0f0f0" />
      <path d="M9 9h7M12.500 9v7M11 15.500h3" stroke="#000" strokeWidth="2" />
    </>
  ),
  'Tools': (
    <>
      <path d="M3 2l11 12" stroke="#806000" strokeWidth="2" />
      <path d="M1 6l4-4 3 1-5 5z" fill="#606000" stroke="#000" />
      <path d="M14 2L3 14" stroke="#000" strokeWidth="2" />
      <path d="M8 9l5 5" stroke="#e0c000" />
    </>
  ),
  'Add sheet': (
    <>
      <path d="M6.500 1.500h9v9h-9z" fill="#ffff99" stroke="#000" />
      <path d="M6 4h9M6 7h9M11 2v8" stroke="#808000" />
      <path d="M1.500 8.500h8v7h-8z" fill="#dce6ff" stroke="#000080" />
      <path d="M1 3.500h6M4 .5v6" stroke="#0000e0" strokeWidth="2" />
    </>
  ),
  'Notes': (
    <>
      <path d="M2 1h12v10h-2v4l-3-2H4v-2H2z" fill="#f4f4f4" stroke="#a0a0a0" />
      <path d="M4 4h8M4 6.500h8M4 9h8" stroke="#a0a0a0" />
    </>
  ),
  'Pitchfork': <path d="M1 15l6-6M4 6v5h6M4 6l5-5M7 9l7-7M10 11l5-5" fill="none" stroke="#000" />,
  'Vertical lines': <path d="M.5 1v14M3.500 1v14M6.500 1v14M10.500 1v14M15.500 1v14" stroke="#000" />,
  'Horizontal lines': <path d="M0 2.500h16M0 6.500h16M0 10.500h16M0 14.500h16" stroke="#000" />,
  'Calculator': (
    <>
      <path d="M0 1.500h16M0 4.500h16" stroke="#000" />
      <path d="M4.500 4.500h8v11h-8z" fill="#fff" stroke="#000080" />
      <path d="M6 6h5v2H6zM6 10h2v1H6zM9 10h2v1H9zM6 13h2v1H6zM9 13h2v1H9z" fill="#000080" />
    </>
  ),
  'Speed arcs': <path d="M1 13c1-9 10-9 13 0M4 13c1-5 5-5 7 0M6 13c1-2 2-2 3 0M2 15L15 3" fill="none" stroke="#000" />,
  'Gann fan': (
    <>
      <path d="M0 15.500h16" stroke="#000" />
      <path d="M0 15L14 2M2 15l13-7M4 15l12-3" fill="none" stroke="#000" strokeDasharray="1 2" />
    </>
  ),
  'Retracement': <path d="M0 14l3-5 4 5V1M8 1.500h8M8 4.500h8M8 7.500h8M8 10.500h8" fill="none" stroke="#000" />,
  'Time zones': <path d="M0 3l5 5M5.500 4v11M8.500 1v14M11.500 1v14M15.500 1v14" stroke="#000" />,
  'Speed lines': <path d="M0 15.500h16M0 15L11 1M0 15l15-8M0 15l16-4" fill="none" stroke="#000" />,
  'Extend': <path d="M1 7.500h14M4 4.500l-3 3 3 3M12 4.500l3 3-3 3" fill="none" stroke="#000" />,
  'Parallel lines': <path d="M1 12L11 2M3 14L13 4M6 15L16 5" stroke="#000" />,
  'Cycle': <path d="M.5 15V8c1-10 14-10 15 0v7M1 11c2-3 4-2 5 3 1-5 3-5 4 0 1-5 3-6 5-3" fill="none" stroke="#000" />,
  'Pencil': (
    <>
      <path d="M0 14.500h10" stroke="#000" />
      <path d="M8 11l4-9 3 1-4 9-3 2z" fill="#ffff33" stroke="#000" />
      <path d="M12 1h3v2h-3z" fill="#900000" />
    </>
  ),
  'Curve': <path d="M2 13.500h4c3 0 6-5 7-10" fill="none" stroke="#000" />,
  'Down arrow': <path d="M7 3h3v6h2l-3.500 4L5 9h2z" fill="#f00" />,
  'Up arrow': <path d="M7 13h3V7h2L8.500 3 5 7h2z" fill="#00f" />,
  'Ellipse': <ellipse cx="8" cy="8" rx="7.500" ry="6" fill="none" stroke="#000" />,
  'Rectangle': <path d="M1.500 1.500h13v13h-13z" fill="none" stroke="#000" />,
};

const fileTools = [
  ['New', 'Open', 'Save all', 'Send', 'Close folder'],
  ['Workspace', 'Print'],
  ['Insert row', 'Insert bar', 'Lock', 'Satellite', 'Blocks'],
];

const chartTools = [
  ['Account', 'Positions', 'Order table'],
  ['Format analysis', 'Up down', 'Strategies'],
  ['Format symbol', 'Format window'],
  ['Schedule', 'Bar interval', 'Chart colors', 'Bars', 'Candles'],
  ['Decrease spacing', 'Increase spacing'],
  ['Zoom in', 'Zoom out'],
  ['Pointer', 'Chart text'],
  ['Tools'],
  ['Add sheet'],
  ['Notes'],
];

const drawingTools = [
  [
    'Pitchfork', 'Vertical lines', 'Horizontal lines', 'Calculator', 'Speed arcs', 'Gann fan', 'Retracement',
    'Time zones', 'Speed lines', 'Extend', 'Parallel lines', 'Cycle', 'Pencil',
  ],
  ['Curve', 'Down arrow', 'Up arrow', 'Ellipse', 'Rectangle'],
];

function ToolButton({ name }: { name: string }) {
  return (
    <button type="button" title={name} aria-label={name} className="flex h-6 w-[23px] shrink-0 items-center justify-center">
      <svg className="h-4 w-4" viewBox="0 0 16 16" shapeRendering="crispEdges">
        {icons[name]}
      </svg>
    </button>
  );
}

function ToolGroups({ groups }: { groups: string[][] }) {
  return (
    <>
      {groups.map((group, i) => (
        <div key={group[0]} className="flex shrink-0 items-center">
          {i > 0 && <Separator />}
          {group.map(name => (
            <ToolButton key={name} name={name} />
          ))}
        </div>
      ))}
    </>
  );
}

function Separator() {
  return <div className="ml-1 h-6 w-1 shrink-0 border-l border-[#a0a0a0]" />;
}

function Grip() {
  return <div className="h-6 w-0 shrink-0 border-l-2 border-dotted border-[#b0b0b0]" />;
}

function Toolbar() {
  return (
    <div className="flex h-[30px] shrink-0 items-center overflow-hidden border-b-2 border-b-[#707070] bg-[#f0f0f0] pl-[11px] pt-0.5">
      <Grip />
      <div className="ml-1 flex items-center">
        <ToolGroups groups={fileTools} />
      </div>
      <Separator />
      <div className="relative ml-0.5 w-[136px] shrink-0">
        <select aria-label="Symbol" className="block h-6 w-full appearance-none border border-[#e0e0e0] bg-white px-1 text-sm">
          <option></option>
        </select>
        <svg className="pointer-events-none absolute right-1.5 top-2.5 h-[5px] w-[9px]" viewBox="0 0 9 5">
          <path d="M0 0h9L4.500 5z" />
        </svg>
      </div>
      <button type="button" aria-label="Go" className="ml-1.5 flex h-6 w-3 shrink-0 items-center">
        <svg className="h-[9px] w-[5px]" viewBox="0 0 5 9">
          <path d="M0 0v9l5-4.500z" />
        </svg>
      </button>
      <div className="ml-1.5 mr-20 flex shrink-0">
        <ToolButton name="Look up" />
      </div>
      <Grip />
      <div className="ml-0.5 mr-4 flex items-center">
        <ToolGroups groups={chartTools} />
      </div>
      <Grip />
      <div className="ml-[3px] flex items-center">
        <ToolGroups groups={drawingTools} />
        <button type="button" className="h-6 w-[23px] text-xs leading-6 font-['Liberation_Sans',sans-serif]">
          abc
        </button>
      </div>
    </div>
  );
}

// ---------------------------------------------------------------------------
// Window frame
// ---------------------------------------------------------------------------

function MdiButtons() {
  const style = 'flex w-[23px] shrink-0 items-center justify-center border border-[#9fb4c6] bg-[#dcebf8] pt-0.5';
  return (
    <>
      <button type="button" aria-label="Minimize chart" className={style}>
        <svg className="h-[9px] w-[9px]" viewBox="0 0 9 9">
          <path d="M1 7h6v2H1z" fill="#6f8596" />
        </svg>
      </button>
      <button type="button" aria-label="Restore chart" className={style}>
        <svg className="h-[9px] w-[9px]" viewBox="0 0 9 9" fill="none" stroke="#6f8596">
          <path d="M3 3.500V1h5.500v4H6M.5 4h5.500v4H.5zM0 4.500h6" />
        </svg>
      </button>
      <button type="button" aria-label="Close chart" className={style}>
        <svg className="h-[9px] w-[9px]" viewBox="0 0 9 9" stroke="#6f8596" strokeWidth="2">
          <path d="M1.500 1.500l6 6M7.500 1.500l-6 6" />
        </svg>
      </button>
    </>
  );
}

function TitleBar() {
  return (
    <header className="flex h-[29px] shrink-0 items-center border-b border-[#33475c] bg-linear-to-r from-[#a9c0d8] from-0% via-[#a9d1fb] via-50% to-[#a9d1fb] to-100%">
      <div className="flex h-full min-w-0 flex-1 items-center bg-linear-to-b from-[#7f9fbe]/60 via-white/30 to-[#6d87a3]/60 pl-0.5">
        <svg className="h-6 w-4 shrink-0" viewBox="0 0 16 24">
          <path d="M3 23C-1 14 0 5 8 2c5-1 8 2 7 7-1 5-4 8-7 11z" fill="#1546d8" />
          <path d="M5 22c-2-6-1-11 2-14l-2-1 6-2 1 6-2-1c-2 3-3 7-3 12z" fill="#e8f0ff" />
          <path d="M3 8c2-4 6-5 10-4" fill="none" stroke="#6fa4ff" />
        </svg>
        <h1 className="ml-2 whitespace-nowrap text-sm leading-5 text-black">
          TradeStation 8.1 - EURO_BUND - EURO-BUND frame bassi - [Chart Analysis - GS:EUROFX&nbsp; 15 min&nbsp; [CEX] EURO FUTURES]
        </h1>
      </div>
      <div className="h-full w-[34%] bg-linear-to-b from-[#a4cef9] via-[#b0d6fd] to-[#7ba6cf]" />
      <div className="flex h-full w-[22%] items-start justify-end bg-linear-to-r from-[#a9d1fb] via-[#1f466d] via-8% to-[#34608a] pr-[3px]">
        <div className="flex h-[25px] overflow-hidden rounded-b-md border border-t-0 border-[#24384c] outline outline-white/50">
          <button type="button" aria-label="Minimize" className="flex w-[38px] items-center justify-center border-r border-[#3b5268] bg-linear-to-b from-[#b4c4d3] via-[#5f7b95] via-50% to-[#93aabf] pt-2">
            <svg className="h-[5px] w-[18px]" viewBox="0 0 18 5">
              <rect x=".5" y=".5" width="17" height="4" fill="#fff" stroke="#555" />
            </svg>
          </button>
          <button type="button" aria-label="Restore" className="flex w-[36px] items-center justify-center border-r border-[#3b5268] bg-linear-to-b from-[#b4c4d3] via-[#5f7b95] via-50% to-[#93aabf]">
            <svg className="h-[18px] w-[20px]" viewBox="0 0 20 18" fill="#fff" stroke="#4a4a4a">
              <path d="M5.500 .5h14v13h-14z" />
              <path d="M.5 4.500h14v13H.5z" />
              <path d="M5.500 8.500h4v4h-4z" fill="#7390ab" />
            </svg>
          </button>
          <button type="button" aria-label="Close" className="flex w-[62px] items-center justify-center bg-linear-to-b from-[#e0a28c] via-[#c4361a] via-50% to-[#dc7550]">
            <svg className="h-4 w-[18px]" viewBox="0 0 18 16">
              <path d="M1 1h5l3 4 3-4h5l-5 7 5 7h-5l-3-4-3 4H1l5-7z" fill="#fff" stroke="#555" />
            </svg>
          </button>
        </div>
      </div>
    </header>
  );
}

const menus = ['File', 'Edit', 'View', 'Insert', 'Format', 'Drawing', 'Window', 'Help'];

function MenuBar() {
  return (
    <nav className="flex h-[30px] shrink-0 items-stretch border-b-2 border-[#a8a8a8] bg-linear-to-b from-white via-[#d5dcee] via-40% to-[#e4e9f6] pl-[7px] pr-px">
      <svg className="mt-1.5 h-[18px] w-[19px] shrink-0" viewBox="0 0 19 18" shapeRendering="crispEdges">
        <path d="M0 0h19v18H0z" />
        <path d="M0 1.500h19" stroke="#0000ff" strokeWidth="2" />
        <path d="M2 11l3-5 3 3 3-4 3 5" fill="none" stroke="#00a000" />
        <path d="M0 14.500h17M16.500 4v13" stroke="#a00000" />
      </svg>
      <div className="ml-0.5 flex items-center">
        {menus.map(menu => (
          <button key={menu} type="button" className="h-full px-1.5 text-[15px] leading-5 text-[#111]">
            {menu}
          </button>
        ))}
      </div>
      <div className="ml-auto flex pt-px">
        <MdiButtons />
      </div>
    </nav>
  );
}

function Scrollbar() {
  return (
    <div className="flex h-[23px] shrink-0 items-center justify-between border-b border-[#e0e0e0] bg-[#ececec] pl-2 pr-1">
      <button type="button" aria-label="Scroll left" className="flex h-4 w-3 items-center">
        <svg className="h-[9px] w-[5px]" viewBox="0 0 5 9">
          <path d="M5 0v9L0 4.500z" fill="#333" />
        </svg>
      </button>
      <div className="flex items-center gap-2.5">
        <button
          type="button"
          aria-label="Scroll position"
          className="flex h-[19px] w-[19px] items-center justify-center gap-0.5 rounded-xs border border-[#999] bg-linear-to-b from-[#f8f8f8] to-[#d0d0d0]"
        >
          <span className="h-2 w-0.5 bg-[#777]" />
          <span className="h-2 w-0.5 bg-[#777]" />
          <span className="h-2 w-0.5 bg-[#777]" />
        </button>
        <button type="button" aria-label="Scroll right" className="flex h-4 w-3 items-center">
          <svg className="h-[9px] w-[5px]" viewBox="0 0 5 9">
            <path d="M0 0v9l5-4.500z" fill="#333" />
          </svg>
        </button>
      </div>
    </div>
  );
}

const sheetTabs = [
  'EURO_TF30', 'EURO_TF60', 'EURO_TF120', 'EURO_TF240', 'BUND_TF30', 'BUND_TF60', 'BUND_TF120', 'BUND_TF240',
  'EURO-BUND frame bassi', 'BUND-EURO 100 gg',
];
const activeTab = 'EURO-BUND frame bassi';

const navArrows: [string, string][] = [
  ['First sheet', 'M2.500 1v8M9 1v8L4 5z'],
  ['Previous sheet', 'M8 1v8L3 5z'],
  ['Next sheet', 'M3 1v8l5-4z'],
  ['Last sheet', 'M8.500 1v8M2 1v8l5-4z'],
];

function TabEdge({ path }: { path: string }) {
  return (
    <svg className="h-full w-2 shrink-0" viewBox="0 0 8 17" preserveAspectRatio="none" fill="none" stroke="#000">
      <path d={path} />
    </svg>
  );
}

function SheetTabs() {
  return (
    <div className="flex h-[18px] shrink-0 border-t border-black bg-[#f0f0f0] text-xs font-['Liberation_Sans',sans-serif]">
      {navArrows.map(([label, path]) => (
        <button
          key={label}
          type="button"
          aria-label={label}
          className="flex w-[17px] shrink-0 items-center justify-center border border-[#909090] border-t-white border-l-white"
        >
          <svg className="h-2.5 w-2.5" viewBox="0 0 11 10" fill="#808080" stroke="#808080">
            <path d={path} />
          </svg>
        </button>
      ))}
      <TabEdge path="M1 0l6 17" />
      {sheetTabs.map((tab, i) => {
        const active = tab === activeTab;
        const last = i === sheetTabs.length - 1;
        return (
          <div key={tab} className="flex shrink-0">
            <button
              type="button"
              aria-current={active ? 'page' : undefined}
              className={`border-b border-black pl-[7px] pr-2 leading-4 ${active ? 'bg-white font-bold' : ''}`}
            >
              {tab}
            </button>
            {last ? <TabEdge path="M7 0L1 17" /> : <TabEdge path={active ? 'M7 0L1 17M4 9l3 8' : 'M1 0l6 17M4 9l-3 8'} />}
          </div>
        );
      })}
    </div>
  );
}

const statusCells = ['Acct:', 'Open Psns:', 'DT BP:', 'Purch Pwr:', 'Closed P/L:', 'RT TE:', 'Open P/L:'];

function StatusBar() {
  return (
    <footer className="flex h-[21px] shrink-0 items-stretch border-t border-b-2 border-t-[#909090] border-b-[#3c4660] bg-[#f0eeeb] text-sm leading-[19px] text-[#111]">
      <span className="ml-0.5">For Help, press F1</span>
      <div className="ml-auto flex divide-x divide-[#d0d0d0] whitespace-nowrap">
        {statusCells.map(cell => (
          <span key={cell} className="pl-1 pr-3.5">
            {cell}
          </span>
        ))}
        <span className="px-1.5 text-[#008000]">ORDER BAR</span>
        <span className="px-1 text-[#008000]">MACROS</span>
        <span className="flex w-[19px] items-start justify-center pt-0.5">
          <svg className="h-3 w-3" viewBox="0 0 12 12">
            <circle cx="6" cy="6" r="5" fill="#e00000" stroke="#300000" />
            <path d="M4 3h2v2H4z" fill="#fff" />
          </svg>
        </span>
        <span className="px-[5px]">11/02/2021 14:37</span>
      </div>
    </footer>
  );
}

export default function App() {
  return (
    <div className="flex min-h-screen w-full flex-col overflow-hidden bg-[#f0f0f0] font-['Open_Sans',sans-serif]">
      <TitleBar />
      <MenuBar />
      <Toolbar />
      <main className="relative flex-1 overflow-hidden border-x-2 border-l-[#707070] border-r-[#e8e8e8] bg-black font-['Liberation_Sans',Arial,sans-serif]">
        <PricePane />
        <MacdPane />
        <CciPane />
        <TimeAxis />
        <div className="absolute -right-2.5 top-2 flex h-[27px] gap-px bg-white">
          <MdiButtons />
        </div>
      </main>
      <Scrollbar />
      <SheetTabs />
      <StatusBar />
    </div>
  );
}
